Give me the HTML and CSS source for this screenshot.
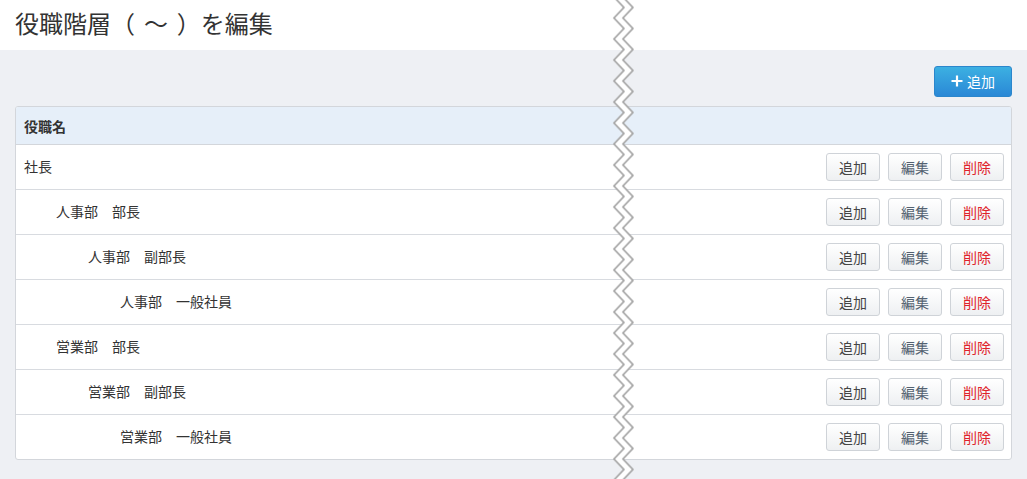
FILE: index.html
```html
<!DOCTYPE html>
<html lang="ja">
<head>
<meta charset="utf-8">
<title>役職階層を編集</title>
<link rel="stylesheet" href="styles.css">
</head>
<body>
<header class="page-header">
  <h1 class="page-title">役職階層（ ～ ）を編集</h1>
</header>
<main class="content">
  <div class="toolbar">
    <button class="btn-primary" type="button">
      <svg class="plus" width="12" height="12" viewBox="0 0 12 12"><path d="M6 0.5v11M0.5 6h11" stroke="#fff" stroke-width="2.2" fill="none"/></svg>
      <span>追加</span>
    </button>
  </div>
  <div class="card">
    <div class="table-head">役職名</div>
    <div class="row"><span class="name lv0">社長</span><div class="actions"><button class="btn">追加</button><button class="btn edit">編集</button><button class="btn del">削除</button></div></div>
    <div class="row"><span class="name lv1">人事部　部長</span><div class="actions"><button class="btn">追加</button><button class="btn edit">編集</button><button class="btn del">削除</button></div></div>
    <div class="row"><span class="name lv2">人事部　副部長</span><div class="actions"><button class="btn">追加</button><button class="btn edit">編集</button><button class="btn del">削除</button></div></div>
    <div class="row"><span class="name lv3">人事部　一般社員</span><div class="actions"><button class="btn">追加</button><button class="btn edit">編集</button><button class="btn del">削除</button></div></div>
    <div class="row"><span class="name lv1">営業部　部長</span><div class="actions"><button class="btn">追加</button><button class="btn edit">編集</button><button class="btn del">削除</button></div></div>
    <div class="row"><span class="name lv2">営業部　副部長</span><div class="actions"><button class="btn">追加</button><button class="btn edit">編集</button><button class="btn del">削除</button></div></div>
    <div class="row"><span class="name lv3">営業部　一般社員</span><div class="actions"><button class="btn">追加</button><button class="btn edit">編集</button><button class="btn del">削除</button></div></div>
  </div>
</main>
<svg class="tear" width="26" height="479" viewBox="0 0 26 479" aria-hidden="true">
  <defs>
    <pattern id="zz" x="0" y="7.5" width="26" height="21" patternUnits="userSpaceOnUse">
      <polygon points="13,0 22,0 12,10.5 22,21 13,21 3,10.5" fill="#fff"/>
      <polyline points="13,-1 13,0 3,10.5 13,21 13,22" fill="none" stroke="#a8a8a8" stroke-width="1.8"/>
      <polyline points="22,-1 22,0 12,10.5 22,21 22,22" fill="none" stroke="#a8a8a8" stroke-width="1.8"/>
    </pattern>
  </defs>
  <rect x="0" y="0" width="26" height="479" fill="url(#zz)"/>
</svg>
</body>
</html>
```
FILE: styles.css
```css
html, body {
  margin: 0;
  padding: 0;
}
body {
  font-family: "Noto Sans CJK JP", "Noto Sans", sans-serif;
  color: #333;
  background: #eef0f4;
  width: 1027px;
  height: 479px;
  overflow: hidden;
  position: relative;
}
.page-header {
  background: #fff;
  height: 50px;
  display: flex;
  align-items: center;
  padding: 0 15px;
}
.page-title {
  margin: 0;
  font-size: 24px;
  font-weight: normal;
  color: #333;
  line-height: 1;
  margin-top: -5px;
  word-spacing: 3.5px;
}
.content {
  padding: 16px 15px 0 15px;
}
.toolbar {
  display: flex;
  justify-content: flex-end;
  margin-bottom: 9px;
}
.btn-primary {
  width: 78px;
  height: 31px;
  display: flex;
  align-items: center;
  justify-content: center;
  gap: 4px;
  border: 1px solid #2b86cc;
  border-radius: 3px;
  background: linear-gradient(#3cb0e2, #2a88d6);
  color: #fff;
  font-family: inherit;
  font-size: 14px;
  padding: 0 0 1px 0;
  cursor: pointer;
}
.plus {
  display: block;
}
.card {
  background: #fff;
  border: 1px solid #d3d6db;
  border-radius: 3px;
  overflow: hidden;
}
.table-head {
  height: 37px;
  background: #e6eff9;
  border-bottom: 1px solid #d3d6db;
  display: flex;
  align-items: center;
  padding-left: 8px;
  font-size: 14px;
  font-weight: bold;
  color: #333;
}
.row {
  height: 44px;
  border-bottom: 1px solid #d8dbe0;
  display: flex;
  align-items: center;
  justify-content: space-between;
  padding: 0 7px 0 8px;
  font-size: 14px;
}
.name {
  margin-top: -2px;
}
.row:last-child {
  border-bottom: none;
}
.lv1 { padding-left: 32px; }
.lv2 { padding-left: 64px; }
.lv3 { padding-left: 96px; }
.actions {
  display: flex;
  gap: 8px;
}
.btn {
  width: 54px;
  height: 28px;
  border: 1px solid #cfd3d8;
  border-radius: 3px;
  background: linear-gradient(#ffffff, #eef0f2);
  font-family: inherit;
  font-size: 14px;
  color: #444;
  padding: 0;
  cursor: pointer;
}
.btn.edit { color: #536170; }
.btn.del { color: #e0242b; }
.tear {
  position: absolute;
  left: 611px;
  top: 0;
}
```
